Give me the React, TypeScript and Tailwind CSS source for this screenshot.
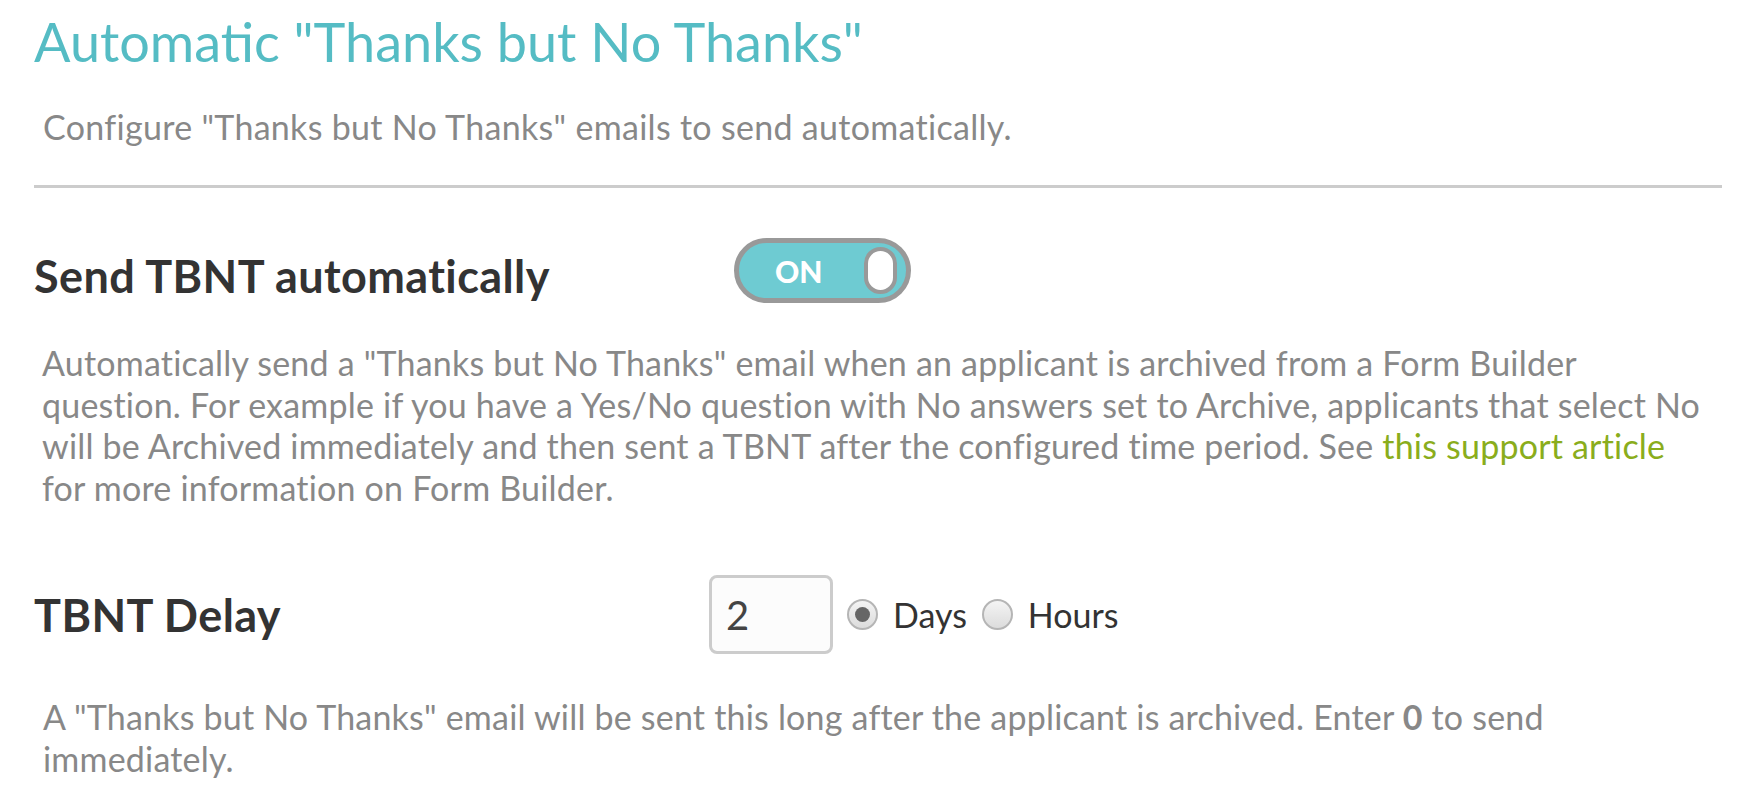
import React from "react";

function Toggle({ on }: { on: boolean }) {
  return (
    <div className="flex h-[65px] w-[177px] items-center rounded-full border-[5px] border-[#999999] bg-[#6ecbd2] pl-[36px] pr-[9px]">
      <span className="text-[30px] font-black leading-none text-white">{on ? "ON" : "OFF"}</span>
      <span className="ml-auto h-[47px] w-[33px] rounded-full border-[4px] border-[#999999] bg-white" />
    </div>
  );
}

function Radio({ checked, label }: { checked: boolean; label: string }) {
  return (
    <label className="flex items-center">
      <span className="flex h-[31px] w-[31px] items-center justify-center rounded-full border-2 border-[#b5b5b5] bg-gradient-to-b from-[#f4f4f4] to-[#dcdcdc]">
        {checked ? <span className="h-[15px] w-[15px] rounded-full bg-[#666666]" /> : null}
      </span>
      <span className="ml-[15px] text-[34px] leading-none text-[#333333]">{label}</span>
    </label>
  );
}

export default function App() {
  return (
    <div
      className="min-h-screen bg-white pl-[34px] pr-[21px] pt-[8px]"
      style={{ fontFamily: "Lato, 'Open Sans', sans-serif" }}
    >
      <h1 className="text-[54px] leading-[68px] text-[#55bcc4]">Automatic "Thanks but No Thanks"</h1>
      <p className="mt-[31px] pl-[9px] text-[34px] leading-[40px] tracking-[0.3px] text-[#888888]">
        Configure "Thanks but No Thanks" emails to send automatically.
      </p>
      <div className="mt-[38px] h-[3px] bg-[#cccccc]" />

      <div className="mt-[50px] flex items-center">
        <h2 className="w-[700px] pt-[12px] text-[45px] font-bold leading-none tracking-[0.4px] text-[#333333]">
          Send TBNT automatically
        </h2>
        <Toggle on />
      </div>
      <p className="mt-[39px] pl-[8px] text-[34px] leading-[41.5px] tracking-[0.2px] text-[#888888]">
        Automatically send a "Thanks but No Thanks" email when an applicant is archived from a Form Builder
        <br />
        question. For example if you have a Yes/No question with No answers set to Archive, applicants that select No
        <br />
        will be Archived immediately and then sent a TBNT after the configured time period. See{" "}
        <a href="#" className="text-[#8aad1c]">
          this support article
        </a>
        <br />
        for more information on Form Builder.
      </p>

      <div className="mt-[67px] flex items-center">
        <h2 className="w-[675px] pt-[2px] text-[45px] font-bold leading-none tracking-[0.4px] text-[#333333]">
          TBNT Delay
        </h2>
        <input
          type="text"
          defaultValue="2"
          className="h-[79px] w-[124px] rounded-[8px] border-[3px] border-[#cccccc] bg-[#fcfcfc] px-[14px] text-[40px] text-[#444444] outline-none"
        />
        <div className="ml-[14px] flex items-center gap-[15px]">
          <Radio checked label="Days" />
          <Radio checked={false} label="Hours" />
        </div>
      </div>
      <p className="mt-[42px] pl-[9px] text-[34px] leading-[42px] tracking-[0.2px] text-[#888888]">
        A "Thanks but No Thanks" email will be sent this long after the applicant is archived. Enter{" "}
        <b className="font-bold">0</b> to send
        <br />
        immediately.
      </p>
    </div>
  );
}
